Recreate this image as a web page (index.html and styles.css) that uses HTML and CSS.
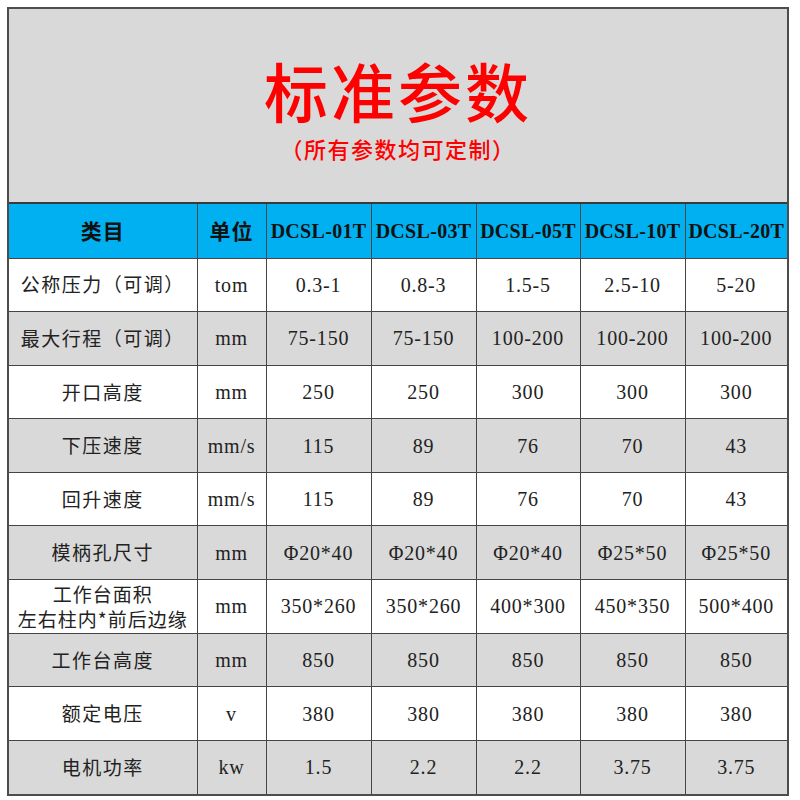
FILE: index.html
```html
<!DOCTYPE html>
<html lang="zh-CN">
<head>
<meta charset="utf-8">
<title>标准参数</title>
<link rel="stylesheet" href="styles.css">
</head>
<body>
<div class="sheet">
  <div class="banner">
    <div class="title">标准参数</div>
    <div class="subtitle">（所有参数均可定制）</div>
  </div>
  <table class="spec">
    <colgroup>
      <col class="c-name"><col class="c-unit"><col class="c-a"><col class="c-b"><col class="c-c"><col class="c-d"><col class="c-e">
    </colgroup>
    <tr class="head">
      <td class="zh">类目</td><td class="zh">单位</td><td>DCSL-01T</td><td>DCSL-03T</td><td>DCSL-05T</td><td>DCSL-10T</td><td>DCSL-20T</td>
    </tr>
    <tr class="white">
      <td class="zh">公称压力（可调）</td><td>tom</td><td>0.3-1</td><td>0.8-3</td><td>1.5-5</td><td>2.5-10</td><td>5-20</td>
    </tr>
    <tr class="gray">
      <td class="zh">最大行程（可调）</td><td>mm</td><td>75-150</td><td>75-150</td><td>100-200</td><td>100-200</td><td>100-200</td>
    </tr>
    <tr class="white">
      <td class="zh">开口高度</td><td>mm</td><td>250</td><td>250</td><td>300</td><td>300</td><td>300</td>
    </tr>
    <tr class="gray">
      <td class="zh">下压速度</td><td>mm/s</td><td>115</td><td>89</td><td>76</td><td>70</td><td>43</td>
    </tr>
    <tr class="white">
      <td class="zh">回升速度</td><td>mm/s</td><td>115</td><td>89</td><td>76</td><td>70</td><td>43</td>
    </tr>
    <tr class="gray">
      <td class="zh">模柄孔尺寸</td><td>mm</td><td>Φ20*40</td><td>Φ20*40</td><td>Φ20*40</td><td>Φ25*50</td><td>Φ25*50</td>
    </tr>
    <tr class="white">
      <td class="zh two"><span class="ln">工作台面积</span><span class="ln">左右柱内*前后边缘</span></td><td>mm</td><td>350*260</td><td>350*260</td><td>400*300</td><td>450*350</td><td>500*400</td>
    </tr>
    <tr class="gray">
      <td class="zh">工作台高度</td><td>mm</td><td>850</td><td>850</td><td>850</td><td>850</td><td>850</td>
    </tr>
    <tr class="white">
      <td class="zh">额定电压</td><td>v</td><td>380</td><td>380</td><td>380</td><td>380</td><td>380</td>
    </tr>
    <tr class="gray">
      <td class="zh">电机功率</td><td>kw</td><td>1.5</td><td>2.2</td><td>2.2</td><td>3.75</td><td>3.75</td>
    </tr>
  </table>
</div>
</body>
</html>
```

FILE: styles.css
```css
html, body {
  margin: 0;
  padding: 0;
  background: #ffffff;
}

body {
  padding: 7px;
}

.sheet {
  width: 782px;
  border: 2px solid #4d4d4d;
  box-sizing: border-box;
  font-family: "Liberation Serif", "Noto Sans CJK SC", serif;
  color: #222;
}

.banner {
  height: 195px;
  box-sizing: border-box;
  background: #d9d9d9;
  border-bottom: 2px solid #3a3a3a;
  display: flex;
  flex-direction: column;
  align-items: center;
  justify-content: center;
  color: #ff0000;
  font-family: "Noto Sans CJK SC", sans-serif;
}

.title {
  font-size: 64px;
  font-weight: 500;
  line-height: 64px;
  letter-spacing: 3px;
  margin-top: 4px;
}

.subtitle {
  font-size: 22px;
  font-weight: 500;
  line-height: 22px;
  margin-top: 16px;
  letter-spacing: 1.5px;
}

.spec {
  width: 100%;
  border-collapse: collapse;
  table-layout: fixed;
}

.c-name { width: 188px; }
.c-unit { width: 69px; }
.c-a { width: 105px; }
.c-b { width: 105px; }
.c-c { width: 104px; }
.c-d { width: 105px; }
.c-e { width: 102px; }

.spec tr {
  height: 53.6px;
}

.spec tr.head {
  height: 54px;
}

.spec td {
  border: 1px solid #454545;
  text-align: center;
  vertical-align: middle;
  padding: 0;
  font-size: 20px;
  line-height: 1.1;
  letter-spacing: 0.8px;
  white-space: nowrap;
}

.spec tr:first-child td { border-top: none; }
.spec tr:last-child td { border-bottom: none; }
.spec td:first-child { border-left: none; }
.spec td:last-child { border-right: none; }

.spec .zh {
  font-family: "Noto Sans CJK SC", sans-serif;
  font-weight: 400;
  font-size: 19px;
  letter-spacing: 1.5px;
  color: #222;
}

.spec .two {
  letter-spacing: 1px;
}

.ln {
  display: block;
  line-height: 25px;
}

.head td {
  background: #00b0f0;
  font-weight: 700;
  color: #111;
  font-size: 20px;
  letter-spacing: 0.3px;
}

.head td.zh {
  font-weight: 700;
  font-size: 21px;
  letter-spacing: 1px;
  color: #111;
}

.white td { background: #ffffff; }
.gray td { background: #d9d9d9; }
```
